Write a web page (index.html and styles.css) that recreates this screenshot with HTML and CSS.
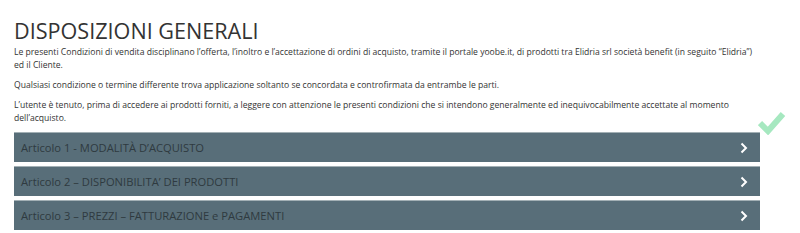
FILE: index.html
```html
<!DOCTYPE html>
<html lang="it">
<head>
<meta charset="utf-8">
<link rel="stylesheet" href="styles.css">
</head>
<body>
<div class="page">
  <h1 class="title">DISPOSIZIONI GENERALI</h1>
  <p class="para">Le presenti Condizioni di vendita disciplinano l’offerta, l’inoltro e l’accettazione di ordini di acquisto, tramite il portale yoobe.it, di prodotti tra Elidria srl società benefit (in seguito “Elidria”) ed il Cliente.</p>
  <p class="para">Qualsiasi condizione o termine differente trova applicazione soltanto se concordata e controfirmata da entrambe le parti.</p>
  <p class="para">L’utente è tenuto, prima di accedere ai prodotti forniti, a leggere con attenzione le presenti condizioni che si intendono generalmente ed inequivocabilmente accettate al momento dell’acquisto.</p>
  <div class="accordion">
    <div class="item">
      <span class="label">Articolo 1 - MODALITÀ D’ACQUISTO</span>
      <svg class="chev" width="8" height="12" viewBox="0 0 8 12"><path d="M1.5 1.5 L6 6 L1.5 10.5" fill="none" stroke="#fff" stroke-width="2"/></svg>
      <svg class="check" width="28" height="24" viewBox="0 0 28 24"><path d="M2 12 L10 20 L25 3" fill="none" stroke="#a6e8c0" stroke-width="6"/></svg>
    </div>
    <div class="item">
      <span class="label">Articolo 2 – DISPONIBILITA’ DEI PRODOTTI</span>
      <svg class="chev" width="8" height="12" viewBox="0 0 8 12"><path d="M1.5 1.5 L6 6 L1.5 10.5" fill="none" stroke="#fff" stroke-width="2"/></svg>
    </div>
    <div class="item">
      <span class="label">Articolo 3 – PREZZI – FATTURAZIONE e PAGAMENTI</span>
      <svg class="chev" width="8" height="12" viewBox="0 0 8 12"><path d="M1.5 1.5 L6 6 L1.5 10.5" fill="none" stroke="#fff" stroke-width="2"/></svg>
    </div>
  </div>
</div>
</body>
</html>
```
FILE: styles.css
```css
html, body {
  margin: 0;
  padding: 0;
  background: #fff;
}
.page {
  padding: 17px 40px 0 14px;
  font-family: "Open Sans", "DejaVu Sans", sans-serif;
  color: #333;
}
.title {
  margin: 0 0 1px 0;
  font-size: 21.6px;
  font-weight: 400;
  line-height: 28px;
  color: #333;
}
.para {
  margin: 0 0 7px 0;
  font-size: 8.6px;
  line-height: 13px;
  color: #333;
}
.accordion {
  margin-top: 4px;
  display: flex;
  flex-direction: column;
  gap: 4px;
}
.item {
  position: relative;
  height: 30px;
  box-sizing: border-box;
  border-top: 1px solid #a3b0b5;
  background: #586e79;
  display: flex;
  align-items: center;
  justify-content: space-between;
  padding: 0 12px 0 7px;
}
.label {
  font-size: 11.2px;
  color: #2f3a40;
}
.chev {
  display: block;
}
.check {
  position: absolute;
  right: -26px;
  top: -22px;
}
```
